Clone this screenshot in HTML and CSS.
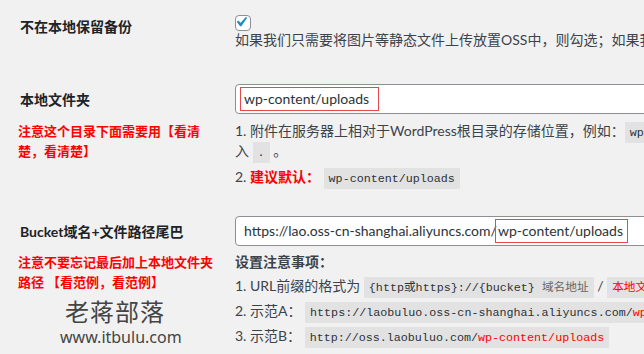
FILE: index.html
```html
<!DOCTYPE html>
<html lang="zh-CN">
<head>
  <meta charset="UTF-8" />
  <meta name="viewport" content="width=device-width, initial-scale=1">
  <title>OSS 上传设置</title>
  <link rel="stylesheet" href="styles.css">
</head>
<body>
  <div class="page">
    <div class="setting first">
      <div class="label tall">不在本地保留备份</div>
      <div class="field-cell">
        <span class="check">
          <svg viewBox="0 0 20 20" width="20" height="20"><path d="M14.83 4.89l1.34.94-5.81 8.38H9.02L5.78 9.67l1.34-1.25 2.57 2.4z"/></svg>
        </span>
      </div>
      <div class="desc">
        <p class="line">如果我们只需要将图片等静态文件上传放置OSS中，则勾选；如果我们需要本地也保留一份备份，则不勾选。</p>
      </div>
    </div>

    <div class="setting second">
      <div class="label mid">本地文件夹</div>
      <div class="field"><span class="marked lead">wp-content/uploads</span></div>
      <div class="note">注意这个目录下面需要用【看清楚，看清楚】</div>
      <div class="desc">
        <p class="line">1. 附件在服务器上相对于WordPress根目录的存储位置，例如：<code>wp-content/uploads</code> （注意不要以“/”开头和结尾），根目录请输</p>
        <p class="line">入 <code>.</code> 。</p>
        <p class="line code-line tip">2. <b class="red">建议默认：</b> <code>wp-content/uploads</code></p>
      </div>
    </div>

    <div class="setting third">
      <div class="label mid">Bucket域名+文件路径尾巴</div>
      <div class="field">https://lao.oss-cn-shanghai.aliyuncs.com/<span class="marked">wp-content/uploads</span></div>
      <div class="note">注意不要忘记最后加上本地文件夹路径 【看范例，看范例】</div>
      <div class="desc">
        <p class="line heading">设置注意事项：</p>
        <p class="line code-line lead-item">1. URL前缀的格式为 <code>{http或https}://{bucket} <span class="soft">域名地址</span></code> / <code><span class="red-code">本地文件夹</span></code></p>
        <p class="line code-line">2. 示范A： <code>https://laobuluo.oss-cn-shanghai.aliyuncs.com/<span class="red-code">wp-content/uploads</span></code></p>
        <p class="line code-line">3. 示范B： <code>http://oss.laobuluo.com/<span class="red-code">wp-content/uploads</span></code></p>
      </div>
    </div>

    <div class="watermark">
      <div class="wm-name">老蒋部落</div>
      <div class="wm-url">www.itbulu.com</div>
    </div>
  </div>
</body>
</html>
```

FILE: styles.css
```css
:root {
  --bg: #f1f1f1;
  --text: #3c434a;
  --label: #1d2327;
  --border: #8c8f94;
  --code-bg: #e2e2e2;
  --red: #ff0000;
  --mark: #e5484d;
  --blue: #1e8cbe;
}
html, body { overflow: hidden; }
body {
  font-family: Lato, "Noto Sans CJK SC", sans-serif;
  font-size: 14px;
  color: var(--text);
  background: var(--bg);
  margin: 0; padding: 0;
}
.page {
  position: relative;
  height: 354px;
  padding-left: 18px;
  box-sizing: border-box;
}
.setting {
  display: grid;
  grid-template-columns: 217px 1fr;
}
.setting.second { margin-top: 34px; row-gap: 7px; }
.setting.third { margin-top: 27px; row-gap: 6px; }

.label { font-weight: 700; color: var(--label); padding-left: 2px; line-height: 20px; }
.label.tall { grid-row: 1 / 3; padding-top: 17px; }
.label.mid { align-self: center; padding-top: 1px; }

.field-cell { padding-top: 15px; }
.check {
  position: relative;
  display: block;
  width: 16px; height: 16px;
  box-sizing: border-box;
  border: 1px solid var(--border);
  border-radius: 4px;
  background: #fff;
  margin-bottom: -1px;
}
.check svg { position: absolute; left: -5px; top: -4px; fill: var(--blue); }

.field {
  width: 520px; height: 30px;
  box-sizing: border-box;
  border: 1px solid var(--border);
  border-radius: 4px;
  background: #fff;
  padding: 0 0 0 8px;
  display: flex; align-items: center;
  white-space: nowrap;
  color: #2c3338;
  line-height: 20px;
}
.marked {
  border: 1px solid var(--mark);
  height: 24px; line-height: 22px;
  box-sizing: border-box;
  margin-left: -2px;
  padding: 0 4px 0 2px;
}
.marked.lead { margin-left: -4px; padding: 0 9px 0 3px; }

.note { color: var(--red); font-weight: 700; font-size: 13px; line-height: 19.5px; padding-right: 10px; font-family: "Noto Sans CJK SC", sans-serif; }

.desc p { margin: 0; }
.line { line-height: 20px; white-space: nowrap; }
.code-line { line-height: 25px; }
.tip { margin-top: 3px !important; }
.heading { font-weight: 700; }
.lead-item { margin-top: 1px !important; }

code {
  font-family: "Liberation Mono", "Noto Sans CJK SC", monospace;
  font-size: 11.7px;
  line-height: 1;
  background: var(--code-bg);
  padding: 4px 5px 3px;
  color: #2c3338;
}
.red { color: var(--red); }
.red-code { color: var(--red); }
.soft { color: #666; }

.watermark {
  position: absolute;
  left: 60px; top: 296px;
  color: #444;
}
.wm-name { font-size: 24px; line-height: 30px; letter-spacing: 1px; padding-left: 5px; font-family: "Noto Sans CJK SC", sans-serif; }
.wm-url { font-family: "Noto Sans", sans-serif; font-size: 16px; line-height: 22px; }
```
